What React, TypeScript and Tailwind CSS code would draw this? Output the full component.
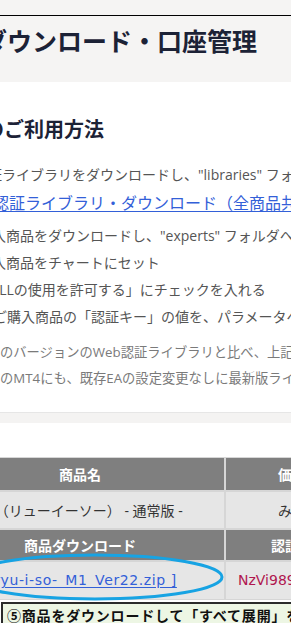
import React from "react";

const jp = "[font-family:'Open_Sans','Noto_Sans_CJK_JP',sans-serif]";
const wide = "[font-family:'DejaVu_Sans','Noto_Sans_CJK_JP',sans-serif]";

export default function App() {
  return (
    <div className={`w-[291px] h-[623px] overflow-hidden bg-white ${jp}`}>
      {/* top strip + title */}
      <div className="h-[15px] bg-[#f5f4f3]" />
      <div className="h-[1px] bg-black" />
      <div className="h-[66px] bg-[#f5f4f3] flex items-start">
        <h1 className="-ml-[18px] mt-[10px] whitespace-nowrap text-[25px] leading-[30px] font-bold text-[#1c2236]">
          ダウンロード・口座管理
        </h1>
      </div>

      {/* usage */}
      <div className="whitespace-nowrap">
        <h2 className="-ml-[16px] mt-[33px] text-[20px] leading-[30px] font-bold text-[#1c2236]">
          のご利用方法
        </h2>
        <div className="mt-[16px] text-[14px] text-[#555]">
          <p className="-ml-[26px] leading-[28px]">認証ライブラリをダウンロードし、"libraries" フォルダへ</p>
          <p className="-ml-[7px] leading-[28px] text-[16px]">
            <a className="text-[#3360d8] underline underline-offset-2">認証ライブラリ・ダウンロード（全商品共通）</a>
          </p>
          <p className="-ml-[8px] mt-[5px] leading-[27px]">入商品をダウンロードし、"experts" フォルダへ</p>
          <p className="-ml-[8px] leading-[27px]">入商品をチャートにセット</p>
          <p className="-ml-[11px] leading-[27px]">DLLの使用を許可する」にチェックを入れる</p>
          <p className="-ml-[7px] leading-[28px]">ご購入商品の「認証キー」の値を、パラメータへ</p>
        </div>
        <div className="mt-[8px] text-[13.3px] text-[#7a7a7a] leading-[26px]">
          <p>のバージョンのWeb認証ライブラリと比べ、上記③</p>
          <p>のMT4にも、既存EAの設定変更なしに最新版ライブラリ</p>
        </div>
      </div>

      <div className="mt-[21px] h-[11px] bg-[#f4f3f2] border-t border-[#e6e6e6]" />

      {/* product table */}
      <div className="relative mt-[34px]">
        <div className="-ml-[65px] w-[460px] grid grid-cols-[288px_170px] gap-[2px] bg-[#d6d6d6] p-[1px] text-[14px] whitespace-nowrap">
          <div className="h-[32px] bg-[#7f7f7f] text-white font-bold flex items-center justify-center">商品名</div>
          <div className="h-[32px] bg-[#7f7f7f] text-white font-bold flex items-center pl-[52px]">価格</div>
          <div className="h-[36px] bg-[#e6e6e6] text-[#333] flex items-center justify-center pr-[36px]">ryu-i-so-（リューイーソー） - 通常版 -</div>
          <div className="h-[36px] bg-[#e6e6e6] text-[#333] flex items-center pl-[52px]">みほん</div>
          <div className="h-[30px] bg-[#7f7f7f] text-white font-bold flex items-center justify-center">商品ダウンロード</div>
          <div className="h-[30px] bg-[#7f7f7f] text-white font-bold flex items-center pl-[45px]">認証キー</div>
          <div className="h-[37px] bg-[#e6e6e6] flex items-center justify-center">
            <a className={`${wide} text-[14px] tracking-[0.6px] text-[#3360d8] underline underline-offset-2`}>[ ryu-i-so-_M1_Ver22.zip ]</a>
          </div>
          <div className={`${wide} h-[37px] bg-[#e6e6e6] text-[14px] text-[#b0174f] flex items-center pl-[12px]`}>NzVi989kQ2xRb7</div>
        </div>

        <svg className="absolute left-0 top-[96px] pointer-events-none" width="230" height="50" viewBox="0 0 230 50">
          <ellipse cx="95" cy="24" rx="127" ry="22" fill="none" stroke="#17a3e3" strokeWidth="3" />
        </svg>

        <div className="mt-[2px] ml-[1px] -mr-[4px] border-2 border-[#2b2b2b] bg-[#edf6e4] pl-[4px] h-[30px] flex items-center whitespace-nowrap">
          <span className="text-[14px] font-bold text-[#111] tracking-[0.8px] -mt-[3px]">⑤商品をダウンロードして「すべて展開」を行う</span>
        </div>
      </div>
    </div>
  );
}
